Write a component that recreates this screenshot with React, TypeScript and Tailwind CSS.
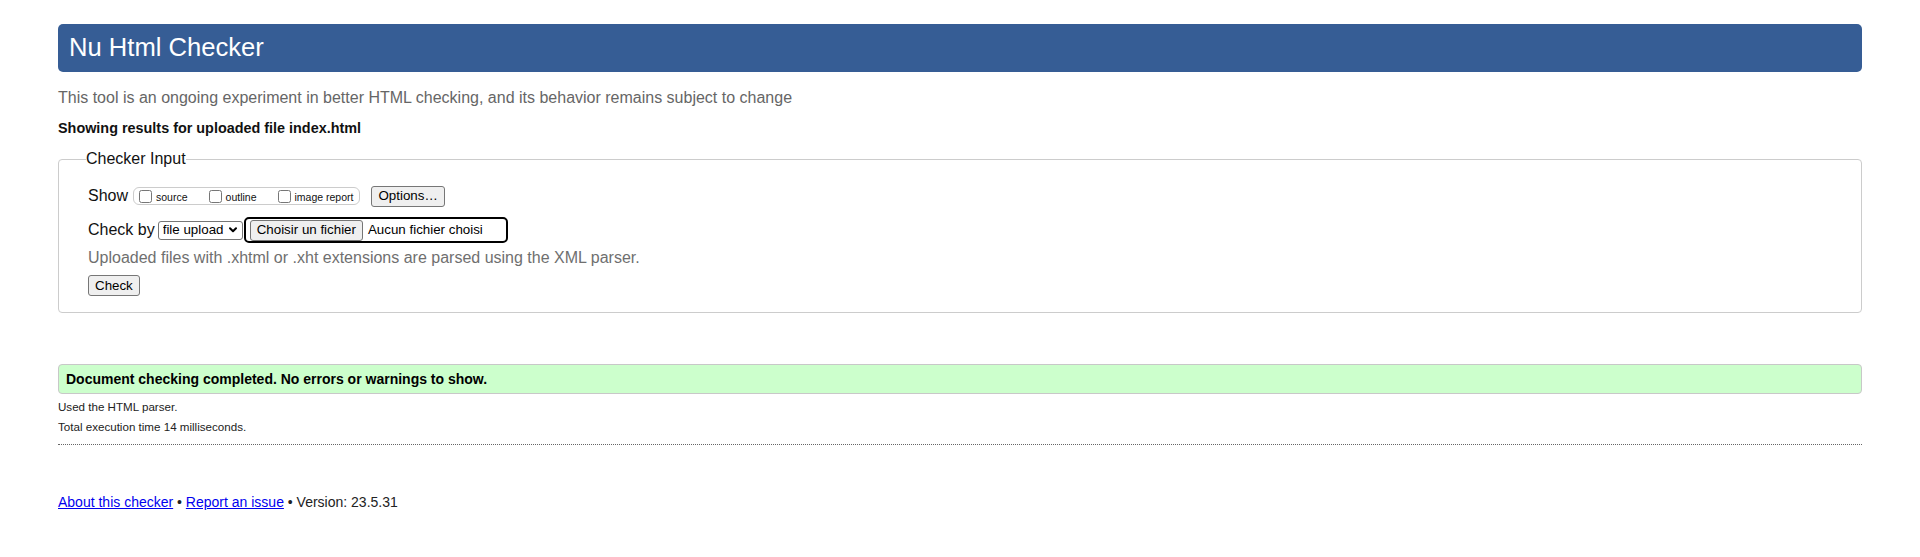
import React from 'react'

const Checkbox: React.FC<{ label: string; last?: boolean }> = ({ label, last }) => (
  <label className={`flex items-center ${last ? '' : 'mr-[21px]'}`}>
    <input type="checkbox" className="m-0 mr-[4px] h-[13px] w-[13px]" />
    <span className="mt-[2px] text-[10.5px] leading-none">{label}</span>
  </label>
)

const App: React.FC = () => {
  return (
    <div className="min-h-[557px] bg-white font-['Liberation_Sans',Arial,sans-serif] text-[#111]">
      <div className="mx-[58px] pt-[24px]">
        {/* Header */}
        <h1 className="rounded-[5px] bg-[#365d95] px-[11px] pt-[8px] pb-[10px] text-[25.6px] leading-[30px] text-white">
          Nu Html Checker
        </h1>

        <p className="mt-[17px] text-[16px] leading-[18px] text-[#666]">
          This tool is an ongoing experiment in better HTML checking, and its behavior remains subject to change
        </p>

        <p className="mt-[13px] text-[14.4px] font-bold leading-[17px]">
          Showing results for uploaded file index.html
        </p>

        {/* Checker input */}
        <fieldset className="mt-[13px] rounded-[4px] border border-[#ccc] pl-[29px] pb-[16px]">
          <legend className="-ml-[2px] text-[16px] leading-[18px]">Checker Input</legend>

          <div className="mt-[17px] flex h-[22px] items-center">
            <span className="text-[16px] leading-[18px]">Show</span>
            <span className="ml-[5px] flex h-[18px] items-center rounded-[6px] border border-[#ccc] pl-[5px] pr-[6px]">
              <Checkbox label="source" />
              <Checkbox label="outline" />
              <Checkbox label="image report" last />
            </span>
            <button className="ml-[11px] h-[21px] rounded-[3px] border border-[#767676] bg-[#efefef] px-[6px] text-[13.333px] leading-none text-black">
              Options…
            </button>
          </div>

          <div className="mt-[10px] flex h-[26px] items-center">
            <span className="text-[16px] leading-[18px]">Check by</span>
            <div className="relative ml-[3px]">
              <select className="block h-[19px] w-[85px] appearance-none rounded-[3px] border border-[#767676] bg-white pl-[4px] pr-[16px] text-[13.333px] leading-none text-black">
                <option>file upload</option>
                <option>address</option>
                <option>text input</option>
              </select>
              <svg
                className="pointer-events-none absolute top-[6px] right-[6px]"
                width="8"
                height="6"
                viewBox="0 0 8 6"
                fill="none"
              >
                <path d="M1 1.2 L4 4.2 L7 1.2" stroke="#000" strokeWidth="2" strokeLinecap="round" strokeLinejoin="round" />
              </svg>
            </div>
            <span className="ml-[1px] flex h-[26px] w-[264px] items-center rounded-[5px] border-2 border-black bg-white">
              <button className="ml-[4px] h-[21px] rounded-[3px] border border-[#767676] bg-[#efefef] px-[6px] text-[13.333px] leading-none text-black">
                Choisir un fichier
              </button>
              <span className="ml-[5px] text-[13.333px] leading-none text-black">Aucun fichier choisi</span>
            </span>
          </div>

          <p className="mt-[6px] text-[16px] leading-[18px] text-[#6f6f6f]">
            Uploaded files with .xhtml or .xht extensions are parsed using the XML parser.
          </p>

          <button className="mt-[8px] block h-[21px] rounded-[3px] border border-[#767676] bg-[#efefef] px-[6px] text-[13.333px] leading-none text-black">
            Check
          </button>
        </fieldset>

        {/* Result */}
        <div className="mt-[51px] flex h-[30px] items-center rounded-[4px] border border-[#c8c8c8] bg-[#ccffcc] px-[7px]">
          <p className="text-[14px] font-bold leading-[16px] text-black">
            Document checking completed. No errors or warnings to show.
          </p>
        </div>

        <div className="mt-[3px] text-[11.6px] leading-[20px] text-[#222]">
          <p>Used the HTML parser.</p>
          <p>Total execution time 14 milliseconds.</p>
        </div>

        <hr className="mt-[7px] border-0 border-t border-dotted border-[#666]" />

        {/* Footer */}
        <p className="mt-[49px] text-[14px] leading-[16px] text-[#222]">
          <a href="#" className="text-[#0000ee] underline">About this checker</a>
          {' • '}
          <a href="#" className="text-[#0000ee] underline">Report an issue</a>
          {' • Version: 23.5.31'}
        </p>
      </div>
    </div>
  )
}

export default App
